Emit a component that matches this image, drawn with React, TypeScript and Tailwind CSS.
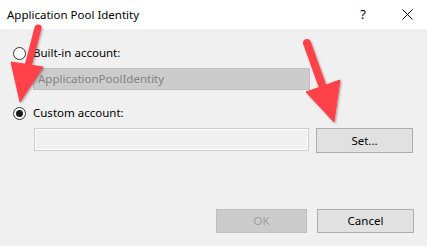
import React from "react";

function Radio({ checked }: { checked?: boolean }) {
  return (
    <span className="w-[13px] h-[13px] rounded-full border border-[#333333] bg-white flex items-center justify-center shrink-0">
      {checked && <span className="w-[7px] h-[7px] rounded-full bg-[#1a1a1a]" />}
    </span>
  );
}

function Arrows() {
  return (
    <svg className="absolute inset-0 pointer-events-none" width="427" height="246" viewBox="0 0 427 246">
      <defs>
        <filter id="sh" x="-20%" y="-20%" width="140%" height="140%">
          <feDropShadow dx="1" dy="1" stdDeviation="1.2" floodColor="#000" floodOpacity="0.35" />
        </filter>
      </defs>
      <g filter="url(#sh)" fill="#ff4348" stroke="#ff4348">
        <line x1="38" y1="28" x2="27" y2="70" strokeWidth="7" strokeLinecap="round" />
        <polygon points="11,62 43,67 20,102" strokeWidth="1" strokeLinejoin="round" />
        <line x1="307" y1="43" x2="326" y2="96" strokeWidth="8" strokeLinecap="round" />
        <polygon points="306,92 340,80 334,122" strokeWidth="1" strokeLinejoin="round" />
      </g>
    </svg>
  );
}

export default function App() {
  return (
    <div className="relative w-[427px] h-[246px] bg-[#f0f0f0] font-['Noto_Sans','Liberation_Sans',sans-serif] text-[11.5px] text-black overflow-hidden">
      <div className="h-[29px] bg-white flex items-center pl-[7px] pr-[14px]">
        <span className="flex-1 text-[11.5px] leading-none">Application Pool Identity</span>
        <span className="w-[14px] text-center text-[13px] leading-none mr-[32px]">?</span>
        <svg width="11" height="11" viewBox="0 0 11 11">
          <path d="M0.5 0.5 L10.5 10.5 M10.5 0.5 L0.5 10.5" stroke="#000" strokeWidth="1" />
        </svg>
      </div>

      <div className="flex flex-col pt-[14px]">
        <label className="h-[20px] flex items-center gap-[7px] pl-[13px]">
          <Radio />
          <span>Built-in account:</span>
        </label>
        <div className="ml-[33px] mt-[5px] w-[277px] h-[22px] bg-[#cccccc] border border-[#bfbfbf] flex items-center pl-[4px] text-[#838383]">
          ApplicationPoolIdentity
        </div>
        <label className="h-[20px] mt-[13px] flex items-center gap-[7px] pl-[13px]">
          <Radio checked />
          <span>Custom account:</span>
        </label>
        <div className="flex items-start mt-[5px] pl-[34px] gap-[7px]">
          <div className="w-[275px] h-[23px] bg-[#f0f0f0] border border-[#cccccc] shadow-[inset_0_0_0_1px_#ffffff]" />
          <button className="w-[97px] h-[25px] bg-[#e1e1e1] border border-[#adadad] flex items-center justify-center">
            Set...
          </button>
        </div>
        <div className="flex justify-end gap-[10px] mt-[56px] pr-[13px]">
          <button className="w-[91px] h-[24px] bg-[#cccccc] border border-[#bfbfbf] text-[#a0a0a0] flex items-center justify-center">
            OK
          </button>
          <button className="w-[97px] h-[24px] bg-[#e1e1e1] border border-[#adadad] flex items-center justify-center">
            Cancel
          </button>
        </div>
      </div>
      <Arrows />
    </div>
  );
}
